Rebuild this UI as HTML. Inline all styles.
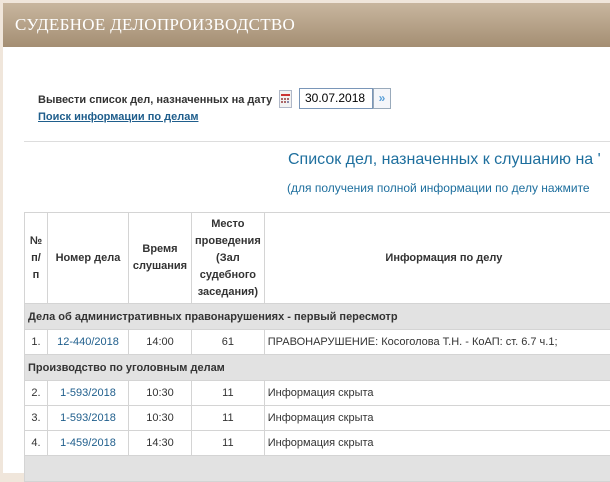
<!DOCTYPE html>
<html><head><meta charset="utf-8"><style>
*{margin:0;padding:0;box-sizing:border-box}
body{width:610px;height:460px;overflow:hidden;background:#f0e6db;font-family:"Liberation Sans",Arial,sans-serif;position:relative}
.main{position:absolute;left:3px;top:3px;width:620px;height:470px;background:#fff}
.hdr{position:absolute;left:0;top:0;width:620px;height:44px;background:linear-gradient(#c8b69f,#a48e73);color:#fff;font-family:"Liberation Serif",serif;font-size:17px;line-height:44px;padding-left:12px;letter-spacing:0.3px}
.lbl{position:absolute;left:35px;top:91px;font-size:11px;font-weight:bold;color:#333}
.lnk{position:absolute;left:35px;top:108px;font-size:11px;font-weight:bold;color:#1f5e8c;text-decoration:underline}
.cal{position:absolute;left:276px;top:87px;width:13px;height:18px;border:1px solid #b0b8c8;background:#f2f2f2}
.inp{position:absolute;left:296px;top:85px;width:74px;height:21px;border:1px solid #7a96b8;font-size:12px;line-height:19px;padding-left:5px;color:#000}
.btn{position:absolute;left:370px;top:85px;width:18px;height:21px;border:1px solid #9ab;background:#f4f6fa;color:#5aa0d8;font-size:12px;text-align:center;line-height:19px;font-weight:bold}
.hr{position:absolute;left:21px;top:138px;width:600px;border-top:1px solid #ddd}
.t1{position:absolute;left:285px;top:148px;font-size:16px;color:#1e6f9e;white-space:nowrap}
.t2{position:absolute;left:284px;top:178px;font-size:12px;color:#1e6f9e;white-space:nowrap}
table{position:absolute;left:21px;top:209px;border-collapse:collapse;font-size:11px;color:#333;width:600px}
td,th{border:1px solid #d4d4d4;text-align:center;padding:0 3px}
th{font-weight:bold;height:91px;line-height:17px}
td{height:25px}
.g td{background:#e2e2e2;text-align:left;font-weight:bold;height:26px;padding-left:3px}
td.i{text-align:left;padding-left:3px}
a{color:#1f5e8c}
</style></head><body>
<div class="main">
<div class="hdr">СУДЕБНОЕ ДЕЛОПРОИЗВОДСТВО</div>
<div class="lbl">Вывести список дел, назначенных на дату</div>
<div class="cal"><svg width="11" height="16"><rect x="1" y="3" width="9" height="2" fill="#c33"/><g fill="#a66"><rect x="1" y="7" width="2" height="2"/><rect x="4" y="7" width="2" height="2"/><rect x="7" y="7" width="2" height="2"/><rect x="1" y="10" width="2" height="2"/><rect x="4" y="10" width="2" height="2"/><rect x="7" y="10" width="2" height="2" fill="#88a"/></g></svg></div>
<div class="inp">30.07.2018</div>
<div class="btn">»</div>
<div class="lnk">Поиск информации по делам</div>
<div class="hr"></div>
<div class="t1">Список дел, назначенных к слушанию на '</div>
<div class="t2">(для получения полной информации по делу нажмите</div>
<table>
<tr><th style="width:23px">№<br>п/п</th><th style="width:81px">Номер дела</th><th style="width:63px">Время<br>слушания</th><th style="width:70px">Место<br>проведения<br>(Зал<br>судебного<br>заседания)</th><th>Информация по делу</th></tr>
<tr class="g"><td colspan="5">Дела об административных правонарушениях - первый пересмотр</td></tr>
<tr><td>1.</td><td><a>12-440/2018</a></td><td>14:00</td><td>61</td><td class="i">ПРАВОНАРУШЕНИЕ: Косоголова Т.Н. - КоАП: ст. 6.7 ч.1;</td></tr>
<tr class="g"><td colspan="5">Производство по уголовным делам</td></tr>
<tr><td>2.</td><td><a>1-593/2018</a></td><td>10:30</td><td>11</td><td class="i">Информация скрыта</td></tr>
<tr><td>3.</td><td><a>1-593/2018</a></td><td>10:30</td><td>11</td><td class="i">Информация скрыта</td></tr>
<tr><td>4.</td><td><a>1-459/2018</a></td><td>14:30</td><td>11</td><td class="i">Информация скрыта</td></tr>
<tr class="g"><td colspan="5">&nbsp;</td></tr>
</table>
</div>
</body></html>
